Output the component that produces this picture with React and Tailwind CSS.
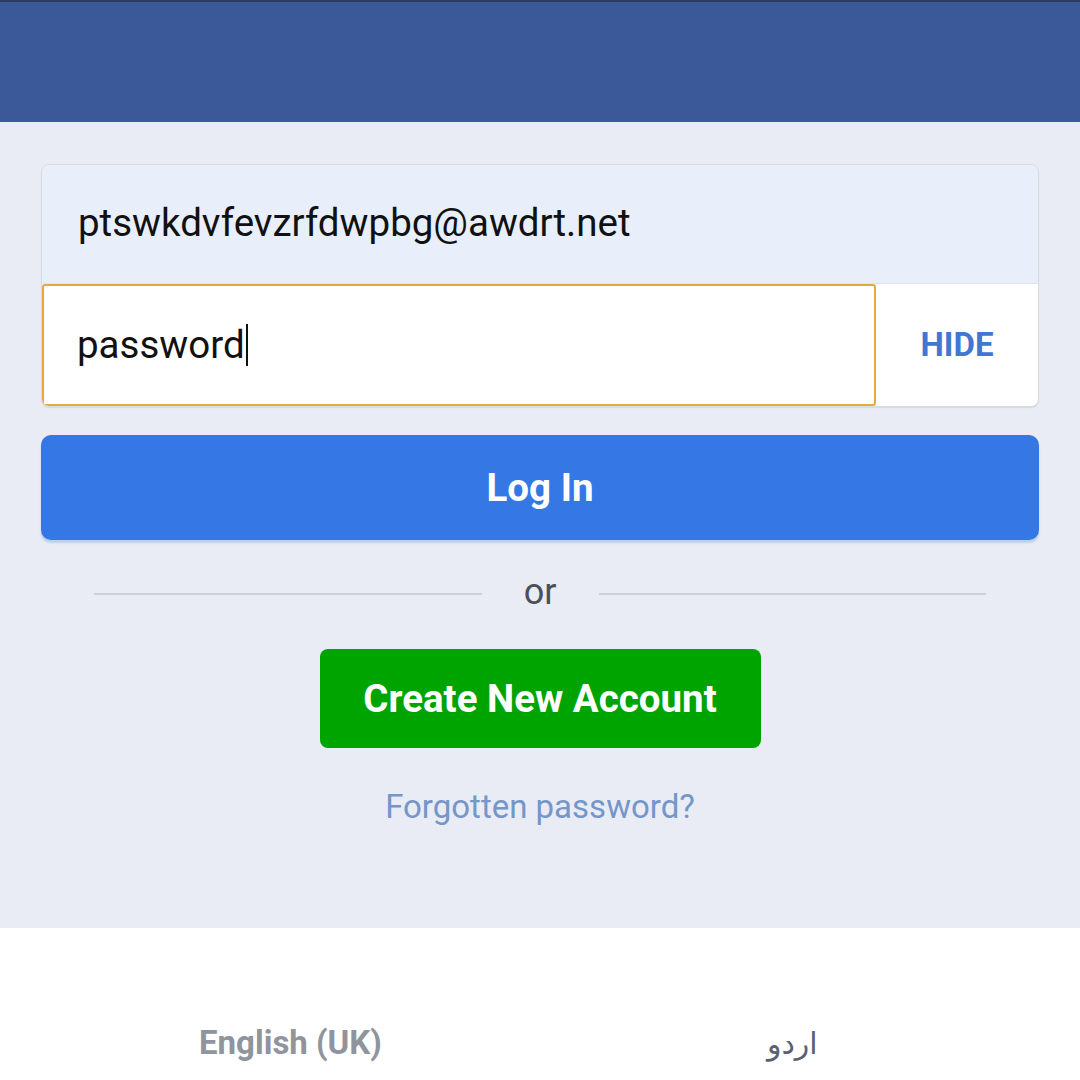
import React from 'react';

export default function App() {
  return (
    <div className="w-[1080px] h-[1080px] overflow-hidden flex flex-col bg-white" style={{ fontFamily: 'Roboto, "Noto Sans", sans-serif' }}>
      <header className="h-[122px] shrink-0 bg-[#3b5998] border-t-2 border-[#2c3d63]" />

      <main className="h-[806px] shrink-0 bg-[#e9ecf4] px-[41px] pt-[42px]">
        <div className="rounded-lg border border-[#d8dbe0] overflow-hidden bg-white shadow-[0_1px_1px_rgba(0,0,0,0.08)]">
          <div className="h-[119px] bg-[#e8effb] flex items-center pl-[36px] pb-[3px] text-[38.5px] text-[#111] border-b border-[#e3e5e9]">
            ptswkdvfevzrfdwpbg@awdrt.net
          </div>
          <div className="h-[122px] flex">
            <div className="w-[834px] border-2 border-[#e6a93c] rounded-[3px] flex items-center pl-[33px] text-[38.5px] text-[#111]">
              password<span className="inline-block w-[2px] h-[42px] bg-[#111] ml-[1px]" />
            </div>
            <div className="flex-1 flex items-center justify-center text-[33px] font-bold text-[#4176d2]">
              HIDE
            </div>
          </div>
        </div>

        <button className="mt-[28px] w-full h-[105px] rounded-[10px] bg-[#3578e5] text-white text-[38.5px] font-bold shadow-[0_3px_2px_rgba(53,120,229,0.25)]">
          Log In
        </button>

        <div className="mt-[34px] flex items-center px-[53px]">
          <div className="flex-1 h-[2px] bg-[#ccd0d5]" />
          <span className="w-[117px] text-center text-[36px] text-[#4b4f56] leading-none pb-[4px]">or</span>
          <div className="flex-1 h-[2px] bg-[#ccd0d5]" />
        </div>

        <div className="mt-[35px] flex justify-center">
          <button className="w-[441px] h-[99px] rounded-[8px] bg-[#00a400] text-white text-[38.5px] font-bold">
            Create New Account
          </button>
        </div>

        <div className="mt-[34px] text-center text-[33px] text-[#7596c8]">Forgotten password?</div>
      </main>

      <footer className="flex-1 flex items-start pt-[90px]">
        <div className="w-[569px] pl-[199px] text-[33px] font-bold text-[#90949c]">English (UK)</div>
        <div className="pl-[198px] pt-[3px] text-[30px] text-[#5b6070]" dir="rtl" style={{ fontFamily: '"DejaVu Sans", "Noto Sans", sans-serif' }}>اردو</div>
      </footer>
    </div>
  );
}
